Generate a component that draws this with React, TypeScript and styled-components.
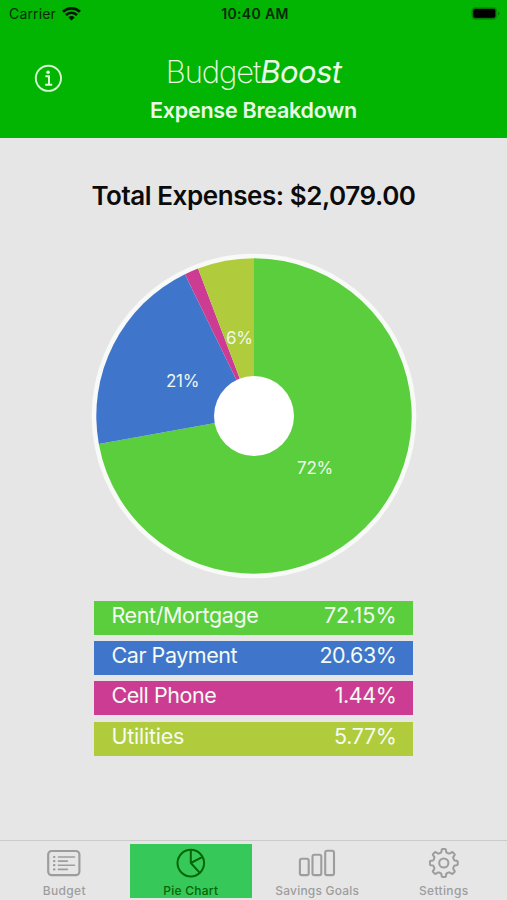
import React from "react";
import styled, { createGlobalStyle } from "styled-components";

const GlobalStyle = createGlobalStyle`
  * { box-sizing: border-box; }
  body { margin: 0; background: #e6e6e6; font-family: Inter, "Liberation Sans", sans-serif; }
`;

const Screen = styled.div`
  width: 507px;
  height: 900px;
  display: flex;
  flex-direction: column;
  background: #e6e6e6;
  overflow: hidden;
`;

const Header = styled.header`
  height: 137.5px;
  flex: none;
  background: #02b502;
`;

const StatusBar = styled.div`
  height: 28px;
  display: grid;
  grid-template-columns: 1fr auto 1fr;
  align-items: center;
  padding: 0 6px 0 9px;
  font-size: 14px;
  line-height: 28px;
  color: #052905;
`;

const Carrier = styled.div`
  display: flex;
  align-items: center;
  gap: 6px;
  letter-spacing: 0.15px;
`;

const Clock = styled.div`
  font-weight: 600;
  letter-spacing: 0.35px;
`;

const BatterySlot = styled.div`
  display: flex;
  justify-content: flex-end;
`;

const TitleRow = styled.div`
  display: grid;
  grid-template-columns: 97px 1fr 97px;
  align-items: start;
`;

const InfoButton = styled.button`
  display: flex;
  border: 0;
  padding: 0;
  margin: 36px 0 0 34px;
  background: none;
`;

const Titles = styled.div`
  text-align: center;
  white-space: nowrap;
  color: #e9fbe6;
`;

const Brand = styled.div`
  margin-top: 24px;
  font-size: 31px;
  line-height: 40px;
  font-weight: 200;
  letter-spacing: -1.1px;
`;

const BrandStrong = styled.span`
  font-weight: 400;
  font-style: italic;
  letter-spacing: -0.6px;
`;

const Subtitle = styled.h1`
  margin: 4px 0 0;
  font-size: 21.5px;
  line-height: 28px;
  font-weight: 600;
  letter-spacing: -0.25px;
`;

const Main = styled.main`
  flex: 1;
  display: flex;
  flex-direction: column;
  align-items: center;
`;

const Total = styled.h2`
  margin: 40px 0 0;
  font-size: 26px;
  line-height: 36px;
  font-weight: 600;
  letter-spacing: -0.44px;
  white-space: nowrap;
  color: #0b0b0b;
`;

const Chart = styled.svg`
  display: block;
  flex: none;
  margin-top: 38.5px;
  font-size: 17px;
`;

const Legend = styled.ul`
  list-style: none;
  margin: 20.5px 0 0;
  padding: 0;
  width: 319px;
  display: flex;
  flex-direction: column;
  gap: 6.4px;
`;

const LegendRow = styled.li<{ $color: string }>`
  height: 34px;
  display: flex;
  justify-content: space-between;
  padding: 0 16.5px 0 17.5px;
  background: ${(p) => p.$color};
  color: #f4fbf2;
  font-size: 21.5px;
  line-height: 28px;
`;

const LegendText = styled.span<{ $spacing: number }>`
  letter-spacing: ${(p) => p.$spacing}px;
`;

const TabBar = styled.nav`
  height: 60px;
  flex: none;
  display: grid;
  grid-template-columns: repeat(4, 121.5px);
  grid-template-rows: 54px;
  column-gap: 5px;
  padding: 3px 3px 2px 3.5px;
  border-top: 1px solid #cbcbcb;
`;

const Tab = styled.a<{ $active?: boolean }>`
  display: flex;
  flex-direction: column;
  align-items: center;
  padding-top: 4px;
  background: ${(p) => (p.$active ? "#36c95a" : "transparent")};
  color: ${(p) => (p.$active ? "#056605" : "#9d9d9d")};

  svg {
    flex: none;
  }
`;

const TabLabel = styled.span<{ $spacing: number }>`
  margin-top: 5px;
  font-size: 12px;
  line-height: 16px;
  font-weight: 500;
  white-space: nowrap;
  letter-spacing: ${(p) => p.$spacing}px;
`;

const expenses = [
  { name: "Rent/Mortgage", percent: 72.15, color: "#5bce3e", nameSpacing: -0.4, valueSpacing: 0, label: { x: 315, y: 474 } },
  { name: "Car Payment", percent: 20.63, color: "#3f76cc", nameSpacing: -0.45, valueSpacing: -0.4, label: { x: 182.5, y: 387 } },
  { name: "Cell Phone", percent: 1.44, color: "#cc3c93", nameSpacing: -0.45, valueSpacing: -0.4, label: null },
  { name: "Utilities", percent: 5.77, color: "#b0cc3d", nameSpacing: -0.25, valueSpacing: -0.35, label: { x: 239.3, y: 344 } },
];

const CX = 254;
const CY = 416;
const R = 157.7;

function slicePath(from: number, to: number) {
  const a = from * 2 * Math.PI;
  const b = to * 2 * Math.PI;
  const large = to - from > 0.5 ? 1 : 0;
  return `M${CX} ${CY}L${CX + R * Math.sin(a)} ${CY - R * Math.cos(a)}A${R} ${R} 0 ${large} 1 ${CX + R * Math.sin(b)} ${CY - R * Math.cos(b)}Z`;
}

function PieChart() {
  const sum = expenses.reduce((s, e) => s + e.percent, 0);
  let start = 0;
  const slices = expenses.map((e) => {
    const from = start;
    start += e.percent / sum;
    return { ...e, d: slicePath(from, start) };
  });
  return (
    <Chart width="326" height="328" viewBox="91 252 326 328">
      <circle cx={CX} cy={CY} r="162.3" fill="#f8faf7" />
      {slices.map((s) => (
        <path key={s.name} d={s.d} fill={s.color} />
      ))}
      <circle cx={CX} cy={CY} r="40" fill="#fff" />
      {slices.map(
        (s) =>
          s.label && (
            <text key={s.name} x={s.label.x} y={s.label.y} textAnchor="middle" fill="#eef8ee" letterSpacing="-0.3">
              {Math.round(s.percent)}%
            </text>
          )
      )}
    </Chart>
  );
}

const WifiIcon = () => (
  <svg width="19" height="15" viewBox="0 0 19 15" fill="none" stroke="#031503" strokeWidth="2.6">
    <path d="M1 4.8A12.2 12.2 0 0 1 18 4.8" />
    <path d="M4 8A7.8 7.8 0 0 1 15 8" />
    <path d="M6.4 10.4A4.4 4.4 0 0 1 12.6 10.4L9.5 13.5Z" fill="#031503" stroke="none" />
  </svg>
);

const BatteryIcon = () => (
  <svg width="30" height="14" viewBox="0 0 30 14">
    <rect x="0.9" y="0.5" width="24.8" height="11.8" rx="3.4" fill="#057405" stroke="#079007" strokeWidth="1" />
    <rect x="2.3" y="2" width="22" height="8.8" rx="1.8" fill="#000" />
    <path d="M27 4.5Q28.6 5 28.6 6.5Q28.6 8 27 8.5Z" fill="#078207" />
  </svg>
);

const InfoIcon = () => (
  <svg width="29" height="29" viewBox="0 0 29 29" fill="none" stroke="#d9f8d4">
    <circle cx="14.4" cy="14.3" r="12.6" strokeWidth="1.9" />
    <circle cx="14.1" cy="8.2" r="1.8" fill="#d9f8d4" stroke="none" />
    <path d="M11.4 12.3H15V20.6M11.2 20.7H18.2" strokeWidth="2" />
  </svg>
);

const BudgetIcon = () => (
  <svg width="34" height="30" viewBox="0 0 34 30" fill="none" stroke="currentColor" strokeLinecap="round">
    <rect x="1.2" y="3" width="31.2" height="24.2" rx="3.6" strokeWidth="2.2" />
    <path d="M11.4 9H27.5M11.4 13.1H20.4M11.4 17.2H27.5M11.4 21.4H20.4" strokeWidth="1.6" />
    <path d="M7 9H7.4M7 13.1H7.4M7 17.2H7.4M7 21.4H7.4" strokeWidth="2.2" />
  </svg>
);

const PieIcon = () => (
  <svg width="30" height="30" viewBox="0 0 30 30" fill="none" stroke="currentColor" strokeWidth="2">
    <circle cx="14.8" cy="15.1" r="13.3" />
    <path d="M14.8 1.7V15L23.6 24.6M14.8 15L26.6 8.8" strokeLinejoin="round" />
  </svg>
);

const BarsIcon = () => (
  <svg width="38" height="30" viewBox="0 0 38 30" fill="none" stroke="currentColor" strokeWidth="2.1">
    <rect x="1.9" y="10.7" width="8.8" height="16.4" rx="1.9" />
    <rect x="14.5" y="6.7" width="8.8" height="20.4" rx="1.9" />
    <rect x="27.2" y="2.7" width="8.8" height="24.4" rx="1.9" />
  </svg>
);

function gearPath() {
  const teeth = 8;
  const points: string[] = [];
  const profile: [number, number][] = [
    [-17, 10.7],
    [-12.5, 11.2],
    [-10, 12.8],
    [-8.3, 13.7],
    [-5.5, 14],
    [5.5, 14],
    [8.3, 13.7],
    [10, 12.8],
    [12.5, 11.2],
    [17, 10.7],
  ];
  for (let i = 0; i < teeth; i++) {
    for (const [offset, radius] of profile) {
      const t = ((i * 45 + offset) * Math.PI) / 180;
      points.push(`${(14.8 + radius * Math.sin(t)).toFixed(2)} ${(15 - radius * Math.cos(t)).toFixed(2)}`);
    }
  }
  return `M${points.join("L")}Z`;
}

const GearIcon = () => (
  <svg width="30" height="30" viewBox="0 0 30 30" fill="none" stroke="currentColor" strokeWidth="2" strokeLinejoin="round">
    <path d={gearPath()} />
    <circle cx="14.8" cy="15" r="4.6" />
  </svg>
);

const tabs = [
  { name: "Budget", Icon: BudgetIcon, spacing: 0.35 },
  { name: "Pie Chart", Icon: PieIcon, spacing: 0.25, active: true },
  { name: "Savings Goals", Icon: BarsIcon, spacing: 0.2 },
  { name: "Settings", Icon: GearIcon, spacing: 0.35 },
];

export default function App() {
  return (
    <Screen>
      <GlobalStyle />
      <Header>
        <StatusBar>
          <Carrier>
            Carrier <WifiIcon />
          </Carrier>
          <Clock>10:40 AM</Clock>
          <BatterySlot>
            <BatteryIcon />
          </BatterySlot>
        </StatusBar>
        <TitleRow>
          <InfoButton aria-label="Info">
            <InfoIcon />
          </InfoButton>
          <Titles>
            <Brand>
              Budget<BrandStrong>Boost</BrandStrong>
            </Brand>
            <Subtitle>Expense Breakdown</Subtitle>
          </Titles>
        </TitleRow>
      </Header>
      <Main>
        <Total>Total Expenses: $2,079.00</Total>
        <PieChart />
        <Legend>
          {expenses.map((e) => (
            <LegendRow key={e.name} $color={e.color}>
              <LegendText $spacing={e.nameSpacing}>{e.name}</LegendText>
              <LegendText $spacing={e.valueSpacing}>{e.percent.toFixed(2)}%</LegendText>
            </LegendRow>
          ))}
        </Legend>
      </Main>
      <TabBar>
        {tabs.map(({ name, Icon, spacing, active }) => (
          <Tab key={name} $active={active}>
            <Icon />
            <TabLabel $spacing={spacing}>{name}</TabLabel>
          </Tab>
        ))}
      </TabBar>
    </Screen>
  );
}
